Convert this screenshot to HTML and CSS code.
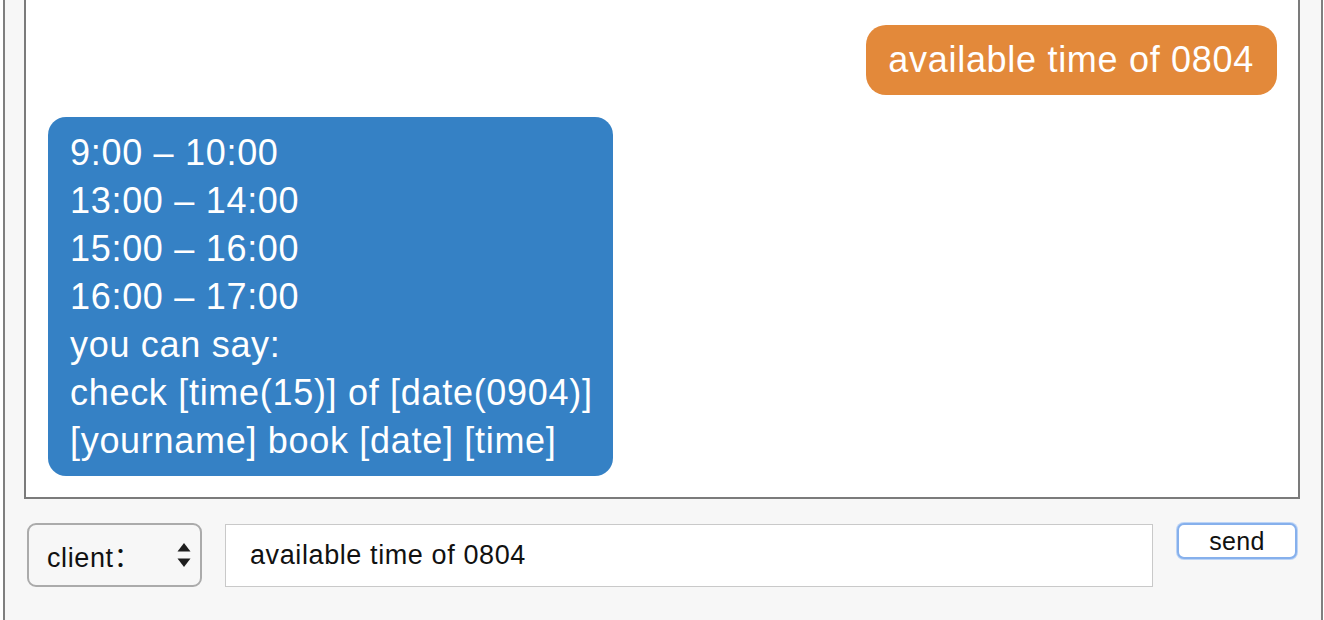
FILE: index.html
```html
<!DOCTYPE html>
<html lang="en">
<head>
<meta charset="utf-8">
<title>Booking chat</title>
<link rel="stylesheet" href="styles.css">
</head>
<body>
<div class="app">
  <div class="chat">
    <div class="msg msg-out">available time of 0804</div>
    <div class="msg msg-in">9:00 – 10:00<br>13:00 – 14:00<br>15:00 – 16:00<br>16:00 – 17:00<br>you can say:<br>check [time(15)] of [date(0904)]<br>[yourname] book [date] [time]</div>
  </div>
  <div class="controls">
    <div class="select">
      <span class="select-label">client：</span>
      <svg class="select-arrows" width="14" height="26" viewBox="0 0 14 26" aria-hidden="true">
        <path d="M7 1 L13.5 9.5 L0.5 9.5 Z" fill="#1e1e1e"/>
        <path d="M7 25 L13.5 16.5 L0.5 16.5 Z" fill="#1e1e1e"/>
      </svg>
    </div>
    <input class="text-input" type="text" value="available time of 0804">
    <button class="send" type="button">send</button>
  </div>
</div>
</body>
</html>
```

FILE: styles.css
```css
html, body {
  margin: 0;
  padding: 0;
  background: #ffffff;
  overflow: hidden;
}

.app {
  box-sizing: border-box;
  width: 1320px;
  margin: -12px 0 0 3px;
  border: 2px solid #7f7f7f;
  background: #f7f7f7;
  padding: 0 21px 60px 19px;
  font-family: "Liberation Sans", Arial, "Noto Sans CJK SC", sans-serif;
}

.chat {
  box-sizing: border-box;
  width: 1276px;
  height: 509px;
  border: 2px solid #7b7b7b;
  background: #ffffff;
  padding: 33px 21px 21px 22px;
  display: flex;
  flex-direction: column;
  align-items: flex-start;
  gap: 22px;
}

.msg {
  color: #ffffff;
  font-size: 36px;
  line-height: 48px;
  letter-spacing: 0.7px;
  white-space: nowrap;
}

.msg-out {
  align-self: flex-end;
  background: #e3893a;
  border-radius: 20px;
  padding: 11px 23px 11px 22px;
}

.msg-in {
  background: #3581c5;
  border-radius: 18px;
  padding: 12px 20px 11px 22px;
}

.controls {
  display: flex;
  align-items: flex-start;
  margin-top: 23px;
  padding-left: 3px;
}

.select {
  box-sizing: border-box;
  width: 175px;
  height: 64px;
  margin-top: 1px;
  margin-right: 23px;
  border: 2px solid #ababab;
  border-radius: 9px;
  background: #f7f7f7;
  display: flex;
  align-items: center;
  justify-content: space-between;
  padding: 0 9px 0 18px;
}

.select-label {
  font-size: 27px;
  letter-spacing: 0.6px;
  color: #111111;
  font-family: "Liberation Sans", Arial, "Noto Sans CJK SC", sans-serif;
}

.select-arrows {
  display: block;
}

.text-input {
  box-sizing: border-box;
  width: 928px;
  height: 63px;
  margin: 2px 23px 0 0;
  border: 1px solid #c9c9c9;
  background: #ffffff;
  padding: 0 0 0 24px;
  font-family: "Liberation Sans", Arial, sans-serif;
  font-size: 27px;
  letter-spacing: 0.6px;
  color: #111111;
  outline: none;
}

.send {
  box-sizing: border-box;
  width: 120px;
  height: 36px;
  margin: 1px 0 0 1px;
  border: 2px solid #86b0ec;
  box-shadow: 0 0 0 1px #bcd4f6;
  border-radius: 7px;
  background: #ffffff;
  font-family: "Liberation Sans", Arial, sans-serif;
  font-size: 25px;
  letter-spacing: 0.3px;
  color: #111111;
  padding: 0;
  line-height: 30px;
}
```
